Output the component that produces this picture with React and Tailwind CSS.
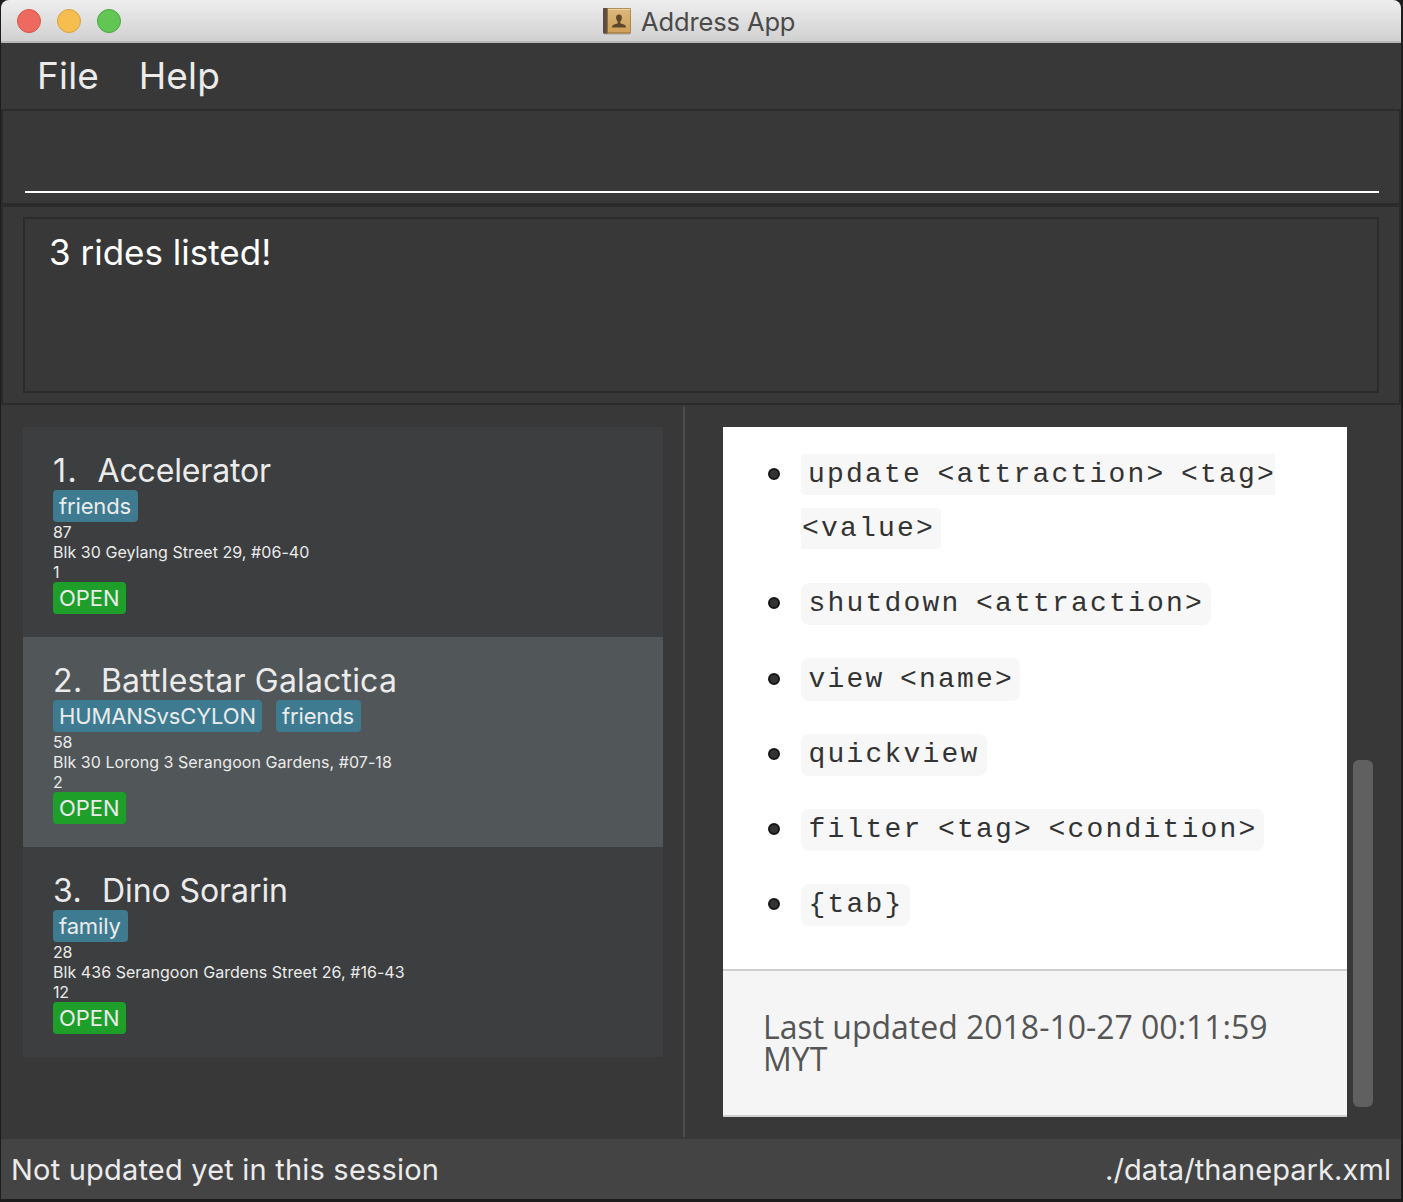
import React from "react";

const rides = [
  {
    id: "1.",
    idClass: "w-[44.5px] tracking-[1.5px]",
    name: "Accelerator",
    nameClass: "tracking-[-0.15px]",
    tags: [{ label: "friends", width: "w-[85px]" }],
    wait: "87",
    address: "Blk 30 Geylang Street 29, #06-40",
    zone: "1",
  },
  {
    id: "2.",
    idClass: "w-[48px] tracking-[0.5px]",
    name: "Battlestar Galactica",
    nameClass: "tracking-[0.17px]",
    tags: [
      { label: "HUMANSvsCYLON", width: "w-[209px]" },
      { label: "friends", width: "w-[85px]" },
    ],
    wait: "58",
    address: "Blk 30 Lorong 3 Serangoon Gardens, #07-18",
    zone: "2",
    selected: true,
  },
  {
    id: "3.",
    idClass: "w-[49px] tracking-[0.5px]",
    name: "Dino Sorarin",
    nameClass: "tracking-[-0.08px]",
    tags: [{ label: "family", width: "w-[75px]" }],
    wait: "28",
    address: "Blk 436 Serangoon Gardens Street 26, #16-43",
    zone: "12",
  },
];

const commands = [
  { text: "shutdown <attraction>", box: "w-[410px] h-[42px] leading-[41px]", gap: "mt-[34px]" },
  { text: "view <name>", box: "w-[219px] h-[43px] leading-[43px]", gap: "mt-[33px]" },
  { text: "quickview", box: "w-[186px] h-[42px] leading-[41px]", gap: "mt-[33px]" },
  { text: "filter <tag> <condition>", box: "w-[463px] h-[42px] leading-[41px]", gap: "mt-[33px]" },
  { text: "{tab}", box: "w-[109px] h-[42px] leading-[41px]", gap: "mt-[33px]" },
];

function BookIcon() {
  return (
    <svg width="30" height="28" viewBox="0 0 30 28" className="shrink-0">
      <defs>
        <linearGradient id="cover" x1="0" y1="0" x2="0" y2="1">
          <stop offset="0" stopColor="#dcb77c" />
          <stop offset="1" stopColor="#cfa159" />
        </linearGradient>
      </defs>
      <rect x="1.5" y="26" width="27" height="1.500" rx="0.7" fill="#a9a49c" />
      <rect x="1" y="1" width="28" height="25.5" rx="1.2" fill="#a87f42" />
      <rect x="5.5" y="1.8" width="22.7" height="23.400" rx="0.8" fill="url(#cover)" />
      <rect x="5.500" y="2" width="22.7" height="1" fill="#ecd3a4" />
      <rect x="1" y="1" width="4.6" height="25.5" rx="1" fill="#5b4b45" />
      <rect x="4.8" y="1.3" width="1" height="25" fill="#8c6e45" />
      <path
        d="M17 7.500c-1.900 0-2.900 1.200-2.900 3 0 1.900.7 3.200 1.600 3.900v1.700c-.3.700-1.700.900-3.500 1.300-1.600.400-2.100 1.300-2.200 3h14c-.1-1.700-.600-2.600-2.200-3-1.800-.400-3.200-.600-3.500-1.300v-1.700c.9-.7 1.600-2 1.600-3.900 0-1.800-1-3-2.900-3z"
        fill="#5e482b"
      />
    </svg>
  );
}

function Badge({ label, className }) {
  return (
    <span className={"flex h-8 items-center rounded-[4px] pl-[6px] text-[22px] whitespace-nowrap " + className}>
      {label}
    </span>
  );
}

function RideCard({ ride }) {
  return (
    <li className={"h-[210px] pt-[24px] pl-[30px] " + (ride.selected ? "bg-[#515658]" : "bg-[#3c3e3f]")}>
      <div className="flex h-[39px] text-[32px] leading-10 whitespace-nowrap">
        <span className={"shrink-0 " + ride.idClass}>{ride.id}</span>
        <span className={ride.nameClass}>{ride.name}</span>
      </div>
      <div className="flex gap-[14px] tracking-[-0.14px]">
        {ride.tags.map((t) => (
          <Badge key={t.label} label={t.label} className={"bg-[#3e7b91] " + t.width} />
        ))}
      </div>
      <div className="text-[16px] leading-5 tracking-[0.05px]">
        <p className="tracking-[-0.3px]">{ride.wait}</p>
        <p>{ride.address}</p>
        <p className="tracking-[-0.3px]">{ride.zone}</p>
      </div>
      <Badge label="OPEN" className="w-[73px] bg-[#1d9f2a]" />
    </li>
  );
}

function Bullet() {
  return <span className="relative -top-px mr-[21px] size-3 shrink-0 rounded-full border-2 border-[#151515] bg-[#333333]" />;
}

const codeText =
  "block bg-[#f7f7f8] font-['Liberation_Mono','Courier_New',monospace] text-[28px] tracking-[2.2px] [word-spacing:-3.5px] whitespace-nowrap text-[#333333]";

export default function App() {
  return (
    <div className="h-[1202px] w-[1403px] overflow-hidden bg-[#1d1d1e] pl-px font-['Inter',sans-serif] text-[#ebebeb]">
      <div className="flex h-[1199px] w-[1400px] flex-col overflow-hidden rounded-t-[8px] bg-[#383838]">
        <header className="flex h-[43px] shrink-0 items-center border-b-2 border-[#b5b8b5] bg-linear-to-b from-[#eeeeee] to-[#d1d1d1] pl-4">
          <div className="flex w-[585px] gap-4">
            <span className="size-6 rounded-full border border-[#d9534a] bg-[#ef6a5e]" />
            <span className="size-6 rounded-full border border-[#dba03c] bg-[#f6be4f]" />
            <span className="size-6 rounded-full border border-[#4ba83f] bg-[#61c654]" />
          </div>
          <BookIcon />
          <h1 className="pt-[2px] pl-[9px] text-[25.5px] leading-[43px] tracking-[-0.13px] text-[#4a4a4a]">Address App</h1>
        </header>

        <nav className="flex h-[66px] shrink-0 items-center gap-[39.5px] pl-[36px] text-[37px] tracking-[0.2px]">
          <span>File</span>
          <span>Help</span>
        </nav>

        <section className="h-24 shrink-0 border-2 border-[#2b2b2b] px-[22px] pr-5">
          <div className="h-[82px] border-b-2 border-white" />
        </section>

        <section className="h-[200px] shrink-0 border-2 border-[#2b2b2b] py-[10px] pr-5 pl-5">
          <div className="h-44 border-2 border-[#2b2b2b] pt-[11px] pl-6 text-[35px] leading-[44px] text-white">
            3 rides listed!
          </div>
        </section>

        <main className="flex h-[734px] shrink-0">
          <ul className="mt-[22px] ml-[22px] w-[640px]">
            {rides.map((r) => (
              <RideCard key={r.id} ride={r} />
            ))}
          </ul>
          <div className="my-[2px] ml-5 w-[2px] bg-[#4f4f4f]" />
          <article className="mt-[22px] ml-[38px] flex h-[690px] w-[624px] flex-col bg-white">
            <ul className="h-[542px] pt-[27px] pl-[45px]">
              <li className="flex">
                <div className="flex h-[41px] items-center">
                  <Bullet />
                </div>
                <div>
                  <code className={codeText + " h-[41px] w-[474px] rounded-l-[4px] pl-[7px] leading-[41px]"}>update &lt;attraction&gt; &lt;tag&gt;</code>
                  <code className={codeText + " mt-[13px] h-[41px] w-[140px] rounded-r-[4px] pl-px leading-[41px]"}>&lt;value&gt;</code>
                </div>
              </li>
              {commands.map((c) => (
                <li key={c.text} className={"flex items-center " + c.gap}>
                  <Bullet />
                  <code className={codeText + " rounded-[8px] pl-[7.5px] " + c.box}>{c.text}</code>
                </li>
              ))}
            </ul>
            <footer className="grow border-y-2 border-[#cfcfcf] bg-[#f5f5f5] pt-[40px] pr-10 pl-[40px] font-['Open_Sans','Noto_Sans',sans-serif] text-[32px] leading-8 tracking-[-0.02px] text-[#555555]">
              Last updated 2018-10-27 00:11:59 MYT
            </footer>
          </article>
          <div className="mt-[355px] ml-[6px] h-[347px] w-5 rounded-[6px] bg-[#606060]" />
        </main>

        <footer className="flex h-[60px] shrink-0 items-center justify-between bg-[#444444] pt-[2px] pr-[10px] pl-[10px] text-[29px]">
          <span className="tracking-[0.2px]">Not updated yet in this session</span>
          <span className="tracking-[0.08px]">./data/thanepark.xml</span>
        </footer>
      </div>
    </div>
  );
}
